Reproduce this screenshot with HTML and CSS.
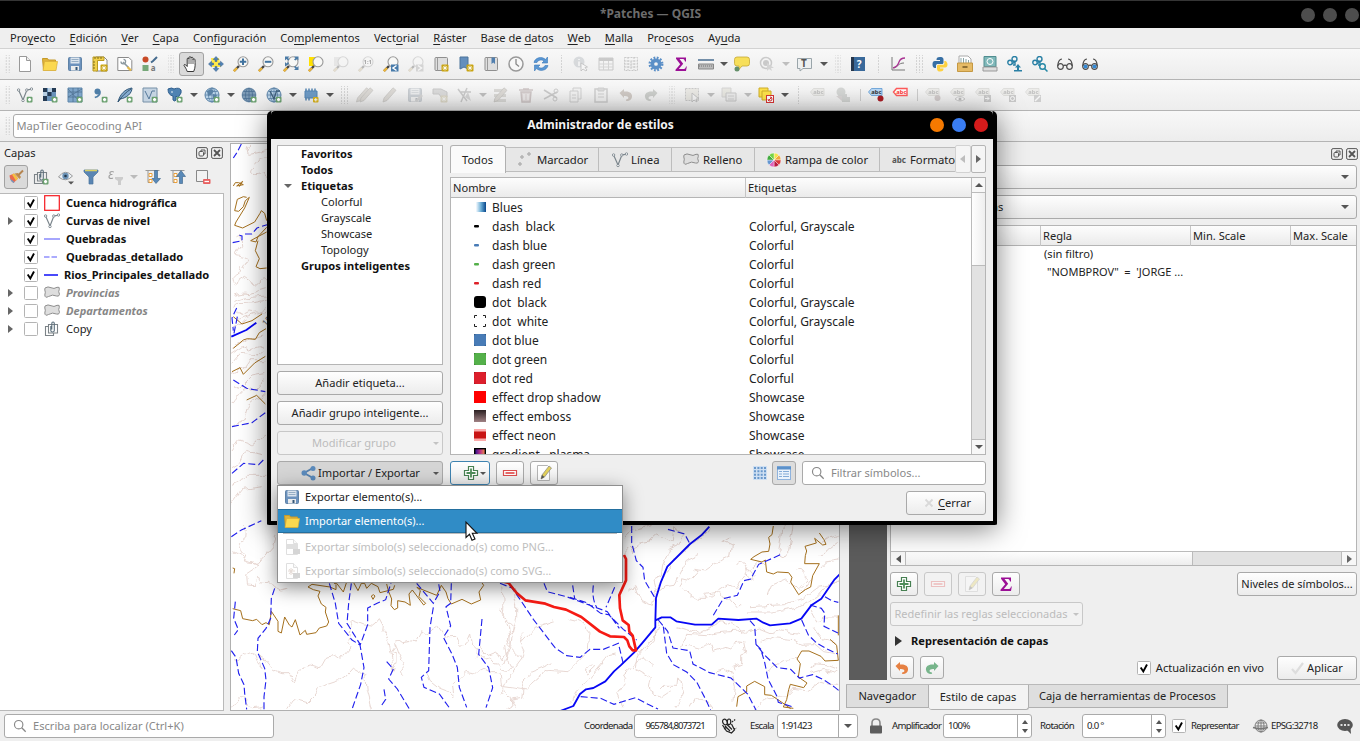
FILE: index.html
```html
<!DOCTYPE html>
<html lang="es">
<head>
<meta charset="utf-8">
<title>*Patches — QGIS</title>
<link rel="stylesheet" href="styles.css">
</head>
<body>
<svg class="defs" aria-hidden="true">
<defs>
<filter id="wiggle" x="-5%" y="-5%" width="110%" height="110%"><feTurbulence type="fractalNoise" baseFrequency=".035" numOctaves="2" seed="4"/><feDisplacementMap in="SourceGraphic" scale="22" xChannelSelector="R" yChannelSelector="G"/></filter>
<linearGradient id="blues"><stop offset="0" stop-color="#f7fbff"/><stop offset=".5" stop-color="#6baed6"/><stop offset="1" stop-color="#08468b"/></linearGradient>
<linearGradient id="emboss" x1="0" y1="0" x2="0" y2="1"><stop offset="0" stop-color="#2b2022"/><stop offset="1" stop-color="#a08184"/></linearGradient>
<linearGradient id="plasma"><stop offset="0" stop-color="#22108c"/><stop offset=".5" stop-color="#b52f8c"/><stop offset="1" stop-color="#f79143"/></linearGradient>
<symbol id="plus" viewBox="0 0 16 16"><rect x="9.700" y="9.700" width="5.800" height="5.800" rx="1" fill="#6aa06f"/><path d="M12.600 11v3.200M11 12.600h3.200" stroke="#fff" stroke-width="1.700"/></symbol>
<symbol id="star" viewBox="0 0 16 16"><rect x="8.500" y="8.500" width="7" height="7" rx="1" fill="#c9a412"/><path d="M12 9.500v5M9.500 12h5M10.300 10.300l3.400 3.400M13.700 10.300l-3.400 3.400" stroke="#fff" stroke-width=".8"/></symbol>
<symbol id="page" viewBox="0 0 16 16"><path d="M2.500.5h7l4 4v11h-11z" fill="#fff" stroke="#999"/><path d="M9.500.5v4h4" fill="#eee" stroke="#999"/></symbol>
<symbol id="folder" viewBox="0 0 16 16"><path d="M.5 2.500h5l1 1.500h7v10h-12z" fill="#e0b33c" stroke="#c59a2a"/><path d="M2.500 5.500h13l-1.500 9H1z" fill="#fbd850" stroke="#d9ae38" stroke-width=".7"/></symbol>
<symbol id="save" viewBox="0 0 16 16"><rect x="1.500" y="1.500" width="13" height="13" rx="1" fill="#6c92bd" stroke="#5f82a6"/><path d="M3.500 1.500h9v6h-9z" fill="#dce5ee"/><path d="M4.500 3.500h7M4.500 5.500h7" stroke="#96aec5"/><path d="M4 10h8v4.500H4z" fill="#eceded"/><path d="M8.500 11h2v3h-2z" fill="#345778"/></symbol>
<symbol id="layout" viewBox="0 0 16 16"><path d="M4 1h8l3 3v11H4z" fill="#fff" stroke="#888"/><path d="M1 1h11v3.500H5.500V15H1z" fill="#f1d14c" stroke="#b99a22"/><path d="M3 1v2M6 1v2M9 1v2M1 6h2M1 9h2M1 12h2" stroke="#7e6c1b"/></symbol>
<symbol id="tools" viewBox="0 0 16 16"><path d="M.8 1.500h11l3 3v10H.8z" fill="#fff" stroke="#8a8a8a"/><path d="M6 6l5.500 5.500" stroke="#8c989f" stroke-width="1.600"/><path d="M4 5.500a2.300 2.300 0 1 0 2.500-2.200" fill="none" stroke="#8c989f" stroke-width="1.300"/><path d="M10.500 11l3.500 3.500" stroke="#e3b94d" stroke-width="2.300"/></symbol>
<symbol id="stylemgr" viewBox="0 0 16 16"><circle cx="3.500" cy="3.500" r="3" fill="#c84a27"/><path d="M9 6.500l2-1.500 4-4" fill="none" stroke="#456b8e" stroke-width="2"/><rect x=".5" y="9" width="6" height="6" fill="#76a879"/><text x="8.700" y="15.300" font-size="8" font-weight="bold" fill="#777">a</text></symbol>
<symbol id="hand" viewBox="0 0 16 16"><path d="M4.200 15.500c-.8-2.500-2-4.300-3-5.700-.7-1 .5-1.800 1.400-1l1.600 1.700V3c0-1.300 1.700-1.300 1.800 0V1.700c0-1.400 1.900-1.400 2 0V2c.3-1.200 2-1 2 .3v1.200c.3-1 2-.8 2 .3 0 4 .8 7-1.300 11.700z" fill="#fff" stroke="#222" stroke-width=".9"/><path d="M6 3v5M8 2v6M10 3v5" stroke="#333" stroke-width=".8"/></symbol>
<symbol id="panarrows" viewBox="0 0 16 16"><path d="M3 2h8l2 9H4z" fill="#ffe94a"/><path d="M8 .5l2.800 3H9v2H7v-2H5.200zM8 15.500l2.800-3H9v-2H7v2H5.200zM.5 8l3-2.800V7h2v2h-2v1.800zM15.500 8l-3-2.800V7h-2v2h2v1.800z" fill="#4f83b5" stroke="#375f8a" stroke-width=".5"/></symbol>
<symbol id="lens" viewBox="0 0 16 16"><path d="M6 10L1 15" stroke="#444" stroke-width="2.400"/><path d="M4 12l-3.200 3.200" stroke="#efb73a" stroke-width="2.200"/><circle cx="10" cy="5.800" r="5" fill="#f8f8f6" stroke="#999" stroke-width="1.100"/></symbol>
<symbol id="globe" viewBox="0 0 16 16"><circle cx="8" cy="8" r="7" fill="#b9d3e8" stroke="#5a82a6"/><path d="M1 8h14M8 1v14M2.500 4.500h11M2.500 11.500h11" stroke="#5a82a6" stroke-width=".8" fill="none"/><ellipse cx="8" cy="8" rx="3.500" ry="7" fill="none" stroke="#5a82a6" stroke-width=".8"/></symbol>
<symbol id="vec" viewBox="0 0 16 16"><path d="M1.800 3.500L6 13 9.500 4q.8-1.700 4-1.700" fill="none" stroke="#7b858c" stroke-width="1.200"/><g fill="#fff" stroke="#7b858c" stroke-width=".9"><circle cx="1.600" cy="3" r="1.200"/><circle cx="6" cy="13.500" r="1.200"/><circle cx="9.800" cy="3" r="1.200"/><circle cx="14.500" cy="2" r="1.200"/></g></symbol>
<symbol id="poly" viewBox="0 0 16 16"><path d="M1 3q3-2 6-.3t6-.4q3-.9 2.300 2-1.300 2.200.2 5-.5 2.700-3 1.700-4-2-8 .5Q1 13.500.8 10q1-3 0-5 0-1.500.2-2z" fill="#dedede" stroke="#8e8e8e"/></symbol>
<symbol id="sheet" viewBox="0 0 16 16"><path d="M1 2h14v12H1z" fill="#f5f5f5" stroke="#777"/><path d="M1 3.500h14" stroke="#777" stroke-width="3"/><path d="M1 8h14M1 11h14M5.500 5v9M10.500 5v9" stroke="#999"/></symbol>
<symbol id="pencil" viewBox="0 0 16 16"><path d="M1 15l1-4L11 .8l3 2.500L5 13.500z" fill="#bba683" stroke="#766a55" stroke-width=".7"/></symbol>
<symbol id="tag" viewBox="0 0 16 16"><path d="M.5 5l3-3.500H14v7H3.500z" fill="#dedbc9" stroke="#aaa790" stroke-width=".8"/><text x="3.300" y="7.400" font-size="5.800" font-weight="bold" fill="#555">abc</text></symbol>
<symbol id="bluetag" viewBox="0 0 16 16"><path d="M.5 5l3-3.500H14v7H3.500z" fill="#b9d8f5" stroke="#5d9bd6" stroke-width=".8"/><text x="3.300" y="7.400" font-size="5.800" font-weight="bold" fill="#333">abc</text></symbol>
<symbol id="glasses" viewBox="0 0 16 16"><g stroke="#4c4c4c" fill="none" stroke-width="1.200"><circle cx="3.500" cy="10.500" r="2.800"/><circle cx="12.500" cy="10.500" r="2.800"/><path d="M6.300 9.800q1.700-1.500 3.400 0M.8 10C.8 6 2.500 3 5 3M15.200 10c0-4-1.700-7-4.200-7"/></g></symbol>
<symbol id="group" viewBox="0 0 16 16"><g fill="none" stroke="#7c8388" stroke-width="1.100"><path d="M4 5.500H1.500v9h8V12"/><path d="M4.500 3.500h9v8.500h-9z"/></g><path d="M6.800 5v4.500c0 2 3.500 2 3.500 0v-7c0-2-2.500-2-2.500 0v6" fill="none" stroke="#5b6f7c" stroke-width="1.100"/></symbol>
<symbol id="bigplus" viewBox="0 0 16 16"><path d="M5.500 1.500h5v4h4v5h-4v4h-5v-4h-4v-5h4z" fill="#fff" stroke="#478052" stroke-width="1.200"/><path d="M8 3.500v9M3.500 8h9" stroke="#4f8d5a" stroke-width="1.800"/></symbol>
<symbol id="minus" viewBox="0 0 16 16"><path d="M1.500 5.500h13v5h-13z" fill="#fff" stroke="#dd4f4f" stroke-width="1.200"/><path d="M3.500 8h9" stroke="#e96969" stroke-width="2"/></symbol>
<symbol id="edit" viewBox="0 0 16 16"><path d="M1.500.5h10l2 2v13h-12z" fill="#fff" stroke="#b5b5b5"/><path d="M5 14l1-4 7-9 2.500 2-7 9z" fill="#e3d15a" stroke="#888" stroke-width=".7"/><path d="M5 14l1-4 2.500 2z" fill="#555"/></symbol>
<symbol id="sigma" viewBox="0 0 16 16"><path d="M3 1.500h10v4h-1c-.5-2-1-2.500-3-2.500H6.500l3.700 4.700L5.800 13H10c2 0 2.500-.5 3-2.500h.8l-.8 4.500H2.500v-1.200l4.700-5.600L3 2.700z" fill="#9b0f96"/></symbol>
<symbol id="undo" viewBox="0 0 16 16"><path d="M1.500 6L6 2v2.500c6-.5 8.500 2 8 5.500-.4 2.500-2.500 4-5 4-1.500 0-1.500-1.500 0-1.700 2-.3 2.500-3.800-3-3.300v2z" fill="currentColor"/></symbol>
<symbol id="search" viewBox="0 0 16 16"><circle cx="6.500" cy="6.500" r="4.800" fill="none" stroke="#878787" stroke-width="1.300"/><path d="M10 10l4.500 4.500" stroke="#878787" stroke-width="1.500"/></symbol>
<symbol id="float" viewBox="0 0 12 12"><rect x=".6" y=".6" width="10.800" height="10.800" rx="1.500" fill="none" stroke="#555"/><rect x="3" y="4.500" width="4.500" height="4.500" rx="1" fill="none" stroke="#555"/><path d="M5 4V3h4v4H8" fill="none" stroke="#555"/></symbol>
<symbol id="shut" viewBox="0 0 12 12"><rect x=".6" y=".6" width="10.800" height="10.800" rx="1.500" fill="none" stroke="#555"/><path d="M3 3l6 6M9 3L3 9" stroke="#555" stroke-width="1.800"/></symbol>
<symbol id="binder" viewBox="0 0 16 16"><rect x="2" y="1.500" width="12.500" height="13" rx="1" fill="#dedede" stroke="#8f8f8f"/><path d="M4.500 1.500v13" stroke="#9a9a9a"/></symbol>
<symbol id="link" viewBox="0 0 16 16"><g fill="none" stroke="#2a80a5" stroke-width="1.400"><circle cx="3" cy="6.500" r="2.200"/><circle cx="7.500" cy="3" r="2.500"/><path d="M5 7.500c2 0 2-1 2-3M8 6v3H6"/></g></symbol>
<symbol id="check" viewBox="0 0 14 14"><rect x=".5" y=".5" width="13" height="13" rx="1" fill="#fff" stroke="#b4b4b4"/><path d="M3.700 6.500l2.600 4L10 3.500" fill="none" stroke="#000" stroke-width="1.900"/></symbol>
<symbol id="box" viewBox="0 0 14 14"><rect x=".5" y=".5" width="13" height="13" rx="1" fill="#fff" stroke="#b4b4b4"/></symbol>
</defs>
</svg>

<div class="window">
<header class="titlebar"><span class="title">*Patches — QGIS</span><span class="lights"><i></i><i></i><i></i></span></header>

<nav class="menubar">
<span>Pro<u>y</u>ecto</span><span><u>E</u>dición</span><span><u>V</u>er</span><span><u>C</u>apa</span><span>Con<u>f</u>iguración</span><span>Co<u>m</u>plementos</span><span>Vect<u>o</u>rial</span><span><u>R</u>áster</span><span>Base de <u>d</u>atos</span><span><u>W</u>eb</span><span><u>M</u>alla</span><span>Pro<u>c</u>esos</span><span>Ay<u>u</u>da</span>
</nav>

<div class="toolbar top">
<i class="grip first"></i>
<span class="tool"><svg><use href="#page"/></svg></span>
<span class="tool"><svg><use href="#folder"/></svg></span>
<span class="tool"><svg><use href="#save"/></svg></span>
<span class="tool"><svg><use href="#layout"/><use href="#star"/></svg></span>
<span class="tool"><svg><use href="#tools"/></svg></span>
<span class="tool"><svg><use href="#stylemgr"/></svg></span>
<i class="grip w16"></i>
<span class="tool on"><svg><use href="#hand"/></svg></span>
<span class="tool"><svg><use href="#panarrows"/></svg></span>
<span class="tool"><svg><use href="#lens"/><path d="M10 2.500v6.500M6.800 5.800h6.500" stroke="#41739f" stroke-width="2"/></svg></span>
<span class="tool"><svg><use href="#lens"/><path d="M6.800 5.800h6.500" stroke="#41739f" stroke-width="2"/></svg></span>
<span class="tool"><svg><use href="#lens"/><path d="M2 .5h4.500L5 2l1.500 1.500-1.500 1L3.500 3 2 4.500zM15.500.5H11L12.500 2 11 3.500l1.500 1L14 3l1.500 1.500zM15.500 14H11l1.500-1.500L11 11l1.500-1 1.500 1.500 1.500-1.500zM2 10.500V6l1.500 1.500L5 6l1 1.500L4.500 9z" fill="#4b7ba6"/></svg></span>
<span class="tool"><svg><path d="M1 1h8v9H1z" fill="#ffe000"/><use href="#lens"/></svg></span>
<span class="tool off"><svg><path d="M1 1h8v9H1z" fill="#ccc"/><use href="#lens"/></svg></span>
<span class="tool off"><svg><use href="#lens"/><text x="5.500" y="8" font-size="6" font-weight="bold">1:1</text></svg></span>
<span class="tool"><svg><use href="#lens"/><rect x="8" y="8.500" width="7.500" height="7" fill="#477baa"/><path d="M13.500 9.500L10 12l3.500 2.500" stroke="#fff" stroke-width="1.500" fill="none"/></svg></span>
<span class="tool off"><svg><use href="#lens"/><rect x="8" y="8.500" width="7.500" height="7" fill="#999"/><path d="M10 9.500l3.500 2.500-3.500 2.500" stroke="#fff" stroke-width="1.500" fill="none"/></svg></span>
<span class="tool"><svg><use href="#binder"/><use href="#star"/></svg></span>
<span class="tool"><svg><path d="M2 1h8v12l-4-2-4 2z" fill="#648fbd" stroke="#4d749b"/><use href="#star"/></svg></span>
<span class="tool"><svg><use href="#binder"/><path d="M8.500 1.500h3.500v6.500l-1.700-1.500L8.500 8z" fill="#517fae"/></svg></span>
<span class="tool"><svg><circle cx="8" cy="8" r="7" fill="#f8f8f8" stroke="#999" stroke-width="1.500"/><path d="M8 3v5l3 2.500" fill="none" stroke="#888" stroke-width="1.300"/></svg></span>
<span class="tool"><svg><path d="M1 6.500C2 1.500 9 0 12.500 3.500L14.500 1v6H9l2-2C8.500 3 5 4 4 6.500zM15 9.500C14 14.500 7 16 3.500 12.500L1.500 15V9H7l-2 2c2.500 2 6 1 7-1.500z" fill="#5a97d4" stroke="#3a78b8" stroke-width=".6"/></svg></span>
<i class="grip w15"></i>
<span class="tool off"><svg><circle cx="6" cy="6" r="5.500" fill="#93a8bd"/><path d="M6 3v1M6 5.500V10" stroke="#fff" stroke-width="1.500"/><path d="M8 7v8l2-2 3 2 1-1-2-2.500 2.500-.5z" fill="#fff" stroke="#555" stroke-width=".8"/></svg></span>
<span class="tool off"><svg><use href="#sheet"/></svg></span>
<span class="tool off"><svg><path d="M1.500 1.500h13v13h-13zM1.500 5h13M1.500 8h13M1.500 11h13M5 1v13M8 5v9M11 1v13" fill="none" stroke="#777" stroke-dasharray="2 1"/></svg></span>
<span class="tool"><svg><circle cx="8" cy="8" r="3.700" fill="none" stroke="#5b8fc7" stroke-width="3.700"/><circle cx="8" cy="8" r="6.300" fill="none" stroke="#5b8fc7" stroke-width="2.300" stroke-dasharray="1.800 1.500"/></svg></span>
<span class="tool"><svg><use href="#sigma"/></svg></span>
<span class="tool"><svg><path d="M0 4h16" stroke="#4a6e91" stroke-width="1.500"/><path d="M.5 8h15v5H.5z" fill="#bbb" stroke="#888"/><path d="M1 10h14" stroke="#777" stroke-dasharray="1 1"/></svg></span>
<i class="drop w11"></i>
<span class="tool"><svg><path d="M3 1h10q2.500 0 2.500 2.500v4Q15.500 10 13 10H8l-3.500 4L5 10H3Q.5 10 .5 7.500v-4Q.5 1 3 1z" fill="#f7df5a" stroke="#c5a836" stroke-width=".8"/><circle cx="3" cy="13" r="2.500" fill="#64906a"/></svg></span>
<span class="tool off"><svg><circle cx="7" cy="7" r="5.500" fill="none" stroke="#777" stroke-width="1.500"/><circle cx="7" cy="7" r="3" fill="#777"/><path d="M8 7v8l2-2 3 2-1-3h3z" fill="#999"/></svg></span>
<i class="drop w13 off"></i>
<span class="tool"><svg><path d="M.5 2.500h14v10H6L3 15v-2.500H.5z" fill="#edf0f1" stroke="#9aa5aa"/><text x="4" y="11" font-size="10" font-weight="bold" font-family="Liberation Serif" fill="#555">T</text></svg></span>
<i class="drop w12"></i>
<i class="grip w16"></i>
<span class="tool"><svg><path d="M1 1h14v14H1z" fill="#39699a"/><path d="M1 1h3v14H1z" fill="#26374c"/><text x="6.700" y="11.800" font-size="10" font-weight="bold" font-family="Liberation Serif" fill="#fff">?</text></svg></span>
<i class="grip w15"></i>
<span class="tool"><svg><path d="M2 1v13h13M4 12C8 11 8 7 14 7" fill="none" stroke="#777"/><path d="M3 12C7 11 8 9 9 6s3-4 6-4" fill="none" stroke="#aa3594" stroke-width="1.300"/></svg></span>
<i class="grip w17"></i>
<span class="tool"><svg><path d="M8 1C5 1 4.500 2 4.500 4H8v1H3C1 5 .5 6.500.5 8.500S1.500 12 3 12h1V9.500C4 8.500 5 8 6 8h4c1 0 1.500-.7 1.500-1.500V3.500C11.500 1.500 10 1 8 1z" fill="#376fa4"/><path d="M8 15.500c3 0 3.500-1 3.500-3H8v-1h5c2 0 2.500-1.500 2.500-3S14.500 5 13 5h-.7v2.200c0 1-.8 1.500-1.800 1.500h-4c-1 0-1.500.5-1.500 1.500v2.500c0 2 1.500 2.800 3 2.800z" fill="#fed13f"/></svg></span>
<span class="tool"><svg><path d="M2 0h9l3 3v5H2z" fill="#fff" stroke="#aaa"/><path d="M4 2v5M6.500 2v5M9 3v4M11.500 4v3" stroke="#89a5a7"/><path d="M.5 7h15v8.500H.5z" fill="#e6bb66" stroke="#c49843"/><path d="M5.500 11h5" stroke="#725724" stroke-width="1.500"/></svg></span>
<span class="tool"><svg><path d="M2 .5h12v10H2z" fill="#7fb8b9" stroke="#518d90"/><path d="M1 11h14v4H1z" fill="#ddd" stroke="#999"/><circle cx="8" cy="5.500" r="3" fill="none" stroke="#fff"/></svg></span>
<span class="tool"><svg><use href="#link"/><path d="M11 8l3 3.500h-2V14h3v1.500H7V14h3v-2.500H8z" fill="#2a80a5"/></svg></span>
<span class="tool"><svg><use href="#link"/><circle cx="10.500" cy="10.500" r="2.800" fill="none" stroke="#2387a5" stroke-width="1.400"/><path d="M12.500 12.500l3 3" stroke="#2387a5" stroke-width="1.500"/></svg></span>
<span class="tool"><svg><use href="#glasses"/></svg></span>
<span class="tool"><svg><use href="#glasses"/><circle cx="3.500" cy="10.500" r="2" fill="#3388d4"/><circle cx="12.500" cy="10.500" r="2" fill="#3388d4"/></svg></span>
</div>

<div class="toolbar">
<i class="grip first"></i>
<span class="tool"><svg><use href="#vec"/><use href="#plus"/></svg></span>
<span class="tool"><svg><path d="M1 1h13v13H1z" fill="#6a93bb"/><path d="M1 1h4v4H1zM10 1h4v4h-4zM5.500 5h4v4h-4zM1 9h4v5H1z" fill="#253b54"/><path d="M6 1h4v4H6zM1 5h4v4H1z" fill="#b8cfe3"/><use href="#plus"/></svg></span>
<span class="tool"><svg><path d="M1 1h14v14H1z" fill="#7fa6ca" stroke="#5f86aa"/><path d="M1 5h14M1 10h14M6 1v14M11 1v14M1 10L15 2M1 2l12 13" stroke="#4f7192" stroke-width=".8"/><use href="#plus"/></svg></span>
<span class="tool"><svg><circle cx="5.500" cy="4.500" r="3" fill="#4f7ea7"/><path d="M7.800 4.500c.5 3-1.500 5-5 6" fill="none" stroke="#4f7ea7" stroke-width="1.800"/><use href="#plus"/></svg></span>
<span class="tool"><svg><path d="M1 15C3 7 8 2 15 1c0 5-5 10-12 11z" fill="#87acd0" stroke="#315879"/><path d="M1 15C5 9 9 5 14 2" fill="none" stroke="#345571"/><use href="#plus"/></svg></span>
<span class="tool"><svg><path d="M1 1h14v14H1z" fill="#c5d4e2" stroke="#7690a7"/><path d="M3 4l4 8 3-8h3" fill="none" stroke="#55789a"/><use href="#plus"/></svg></span>
<span class="tool"><svg><path d="M1 2q4-2 6 0 5-2 7 1 1 3-2 6l-1 2-2-2v4q-1 2-3 0V9Q1 8 1 2z" fill="#4e82b2" stroke="#2e5e8d"/><circle cx="5" cy="5" r=".8" fill="#fff"/><use href="#plus"/></svg></span>
<i class="drop w12"></i>
<span class="tool"><svg><use href="#globe"/><path d="M3 4l4-2 3 2-3 4-3 1zM9 7l4 1-2 5-2-2z" fill="#5a82a6"/><use href="#plus"/></svg></span>
<i class="drop w12"></i>
<span class="tool"><svg><circle cx="8" cy="8" r="7" fill="#38597a"/><use href="#globe" opacity=".55"/><use href="#plus"/></svg></span>
<span class="tool"><svg><use href="#globe"/><path d="M4 4l4 8 2.500-8H14" fill="none" stroke="#3f5f7c" stroke-width="1.300"/><use href="#plus"/></svg></span>
<i class="drop w12"></i>
<span class="tool"><svg><path d="M2 4h12v7H2z" fill="#6e9bc6" stroke="#5585b3"/><path d="M3 1.500V4M6 1.500V4M9 1.500V4M12 1.500V4M3 11v2.500M6 11v2.500" stroke="#5585b3" stroke-width="1.500"/><rect x="10" y="10" width="5.500" height="5.500" rx="1" fill="#dcb41c"/><path d="M12.800 11v3.500M11 12.800h3.500" stroke="#fff"/></svg></span>
<i class="drop w12"></i>
<i class="grip w17"></i>
<span class="tool off"><svg><use href="#pencil" x="-1.500"/><use href="#pencil" x="2"/></svg></span>
<span class="tool off"><svg><use href="#pencil"/></svg></span>
<span class="tool off"><svg><use href="#save"/><path d="M8 14l6-7 2 2-6 6z" fill="#999"/></svg></span>
<span class="tool off"><svg><path d="M1 2h8l6 3v5H9l-2-3H1z" fill="#aaa" stroke="#777"/><use href="#star"/></svg></span>
<span class="tool off"><svg><path d="M1 2l9 12M10 1L4 15M4 5h10" stroke="#777" stroke-width="1.500"/><path d="M8 10l3-5 3 9z" fill="#999"/></svg></span>
<i class="drop w11 off"></i>
<span class="tool off"><svg><path d="M1 2h12v3H1zM1 7h12v3H1zM1 12h12v3H1z" fill="#aaa68e"/><use href="#pencil"/></svg></span>
<span class="tool off"><svg><path d="M1 3h14M5 2h6M3 5h10l-1 10H4z" fill="#d7a6a6" stroke="#a66" stroke-width="1.500"/><path d="M6 7v6M10 7v6" stroke="#fff"/></svg></span>
<span class="tool off"><svg><path d="M1 3l13 8M1 12l13-7" stroke="#777" stroke-width="1.500"/><circle cx="12" cy="12" r="2" fill="none" stroke="#777"/><circle cx="13" cy="4" r="2" fill="none" stroke="#777"/></svg></span>
<span class="tool off"><svg><path d="M5 1h8v11H5z" fill="#eee" stroke="#888"/><path d="M2 4h8v11H2z" fill="#eee" stroke="#888"/><path d="M4 8h4M4 11h4" stroke="#888"/></svg></span>
<span class="tool off"><svg><path d="M2 2h12v13H2z" fill="#eee" stroke="#888" stroke-width="1.500"/><path d="M5 1h6v3H5zM5 7h6M5 10h6" stroke="#888" fill="#aaa"/></svg></span>
<span class="tool off brown"><svg><use href="#undo"/></svg></span>
<span class="tool off olive"><svg><g transform="matrix(-1 0 0 1 16 0)"><use href="#undo"/></g></svg></span>
<i class="grip w16"></i>
<span class="tool off"><svg><path d="M1.500 1.500h13v12h-13z" fill="#ddd5b0" stroke="#777" stroke-dasharray="2 1"/><path d="M8 6v9l2-2 3 2-1-3h3z" fill="#fff" stroke="#666"/></svg></span>
<i class="drop w12 off"></i>
<span class="tool off"><svg><path d="M1 1h9v9H1z" fill="#d8d1a0" stroke="#999"/><path d="M5 6h10v8H5z" fill="#ddd" stroke="#777"/><path d="M7 9h6M7 12h6" stroke="#888"/></svg></span>
<i class="drop w12 off"></i>
<span class="tool"><svg><path d="M1 1h9v9H1z" fill="#ffe34a" stroke="#cfae2b"/><path d="M4 4h9v9H4z" fill="#ffe34a" stroke="#cfae2b"/><rect x="8.500" y="8.500" width="7" height="7" fill="#fff" stroke="#da3535"/><path d="M10 14l4-4M10 12a2 2 0 1 0 2-2" stroke="#da3535" fill="none"/></svg></span>
<i class="drop w12"></i>
<i class="grip w15"></i>
<span class="tool off"><svg><use href="#tag"/></svg></span>
<span class="tool off"><svg><circle cx="6" cy="5" r="4.500" fill="#8f9d8e"/><path d="M7 7h5v3h3v5H7z" fill="#8f9d8e"/><path d="M1 9h6v5z" fill="#b99"/></svg></span>
<i class="sep"></i>
<span class="tool"><svg><use href="#bluetag"/><circle cx="12.500" cy="11.500" r="3" fill="#aa1d25"/></svg></span>
<span class="tool"><svg><path d="M.5 5l3-3.500H14v7H3.500z" fill="#fff" stroke="#ff5a5a" stroke-width="1.400"/><text x="3.300" y="7.300" font-size="5.800" font-weight="bold" fill="#f33">abc</text></svg></span>
<i class="sep"></i>
<span class="tool off"><svg><use href="#tag"/><circle cx="12.500" cy="11" r="3" fill="#a77"/></svg></span>
<span class="tool off"><svg><use href="#tag"/><path d="M5 12q5-5 10 0-5 4-10 0z" fill="#fff" stroke="#777"/><circle cx="10" cy="12" r="1.500" fill="#555"/></svg></span>
<span class="tool off"><svg><use href="#tag"/><path d="M9 8h7v7H9z" fill="#777"/><path d="M10 11.500h4M12 9.500l2 2-2 2" stroke="#fff" fill="none"/></svg></span>
<span class="tool off"><svg><use href="#tag"/><path d="M9 8h7v7H9z" fill="#777"/><circle cx="12.500" cy="11.500" r="2" stroke="#fff" fill="none"/></svg></span>
<span class="tool off"><svg><use href="#tag"/><path d="M9 8h7v7H9z" fill="#888"/><path d="M10 14l5-5" stroke="#fff" stroke-width="1.500"/></svg></span>
</div>

<div class="toolbar third"><i class="grip first"></i><div class="geocode">MapTiler Geocoding API</div></div>

<main class="main">
<section class="layers">
<div class="dockhead"><span>Capas</span><svg class="s12"><use href="#float"/></svg><svg class="s12"><use href="#shut"/></svg></div>
<div class="layertools">
<span class="lt on"><svg><path d="M1.500 6.500L6 4.500l4 5-4.500 4.500Q2 12 1.500 6.500z" fill="#e9694f"/><path d="M4 5.500l2-1 4 5-2 2.200z" fill="#f5c142"/><path d="M2 9.500l4.500 3.500-1 1Q3 13 2 9.500z" fill="#6d9ac6"/><path d="M6.500 4.500l5 5.500 1.500-2-3-4z" fill="#c08b4c"/><path d="M10 6.500l5-5" stroke="#b58550" stroke-width="2"/></svg></span>
<span class="lt"><svg><use href="#group"/><use href="#plus"/></svg></span>
<span class="lt"><svg><path d="M.5 8Q7-1 14.500 7 8 14 .5 8z" fill="#eef3f7" stroke="#999"/><circle cx="7.500" cy="7" r="3.200" fill="#6b92b6"/><circle cx="7.500" cy="7" r="1.300" fill="#25394d"/><path d="M10 12.500h6l-3 3z" fill="#555"/></svg></span>
<span class="lt"><svg><path d="M1 1h14v2l-5 5v7H6V8L1 3z" fill="#5985b3" stroke="#4c769e" stroke-width=".7"/><path d="M2 1.500h12" stroke="#d9cf62" stroke-width="1.500"/></svg></span>
<span class="lt off"><svg><text x="0" y="10" font-size="14" font-family="Liberation Serif" font-style="italic">ε</text><path d="M7 8h8v2l-2 2v4h-3v-4L7 10z" fill="#888"/></svg></span>
<i class="drop w12 off"></i>
<span class="lt"><svg><path d="M.5 1.500h14M3 1.500v12h3" stroke="#999" fill="none"/><path d="M4 4.500h3v3H4zM4 10.500h3v3H4z" fill="#fff" stroke="#eba03a"/><path d="M9.500 1.500h3v8h3l-4.500 5-4-5h2.500z" fill="#5989b8" stroke="#355f87" stroke-width=".6"/></svg></span>
<span class="lt"><svg><path d="M.5 1.500h14M3 1.500v12h3" stroke="#999" fill="none"/><path d="M4 4.500h3v3H4zM4 10.500h3v3H4z" fill="#fff" stroke="#eba03a"/><path d="M9.500 14.500h3v-7h3L11 1.500l-4.500 6h3z" fill="#5989b8" stroke="#355f87" stroke-width=".6"/></svg></span>
<span class="lt"><svg><path d="M1.500 1.500h11v11h-11z" fill="#f2f2f2" stroke="#888"/><rect x="8" y="10" width="7.500" height="5" rx="1" fill="#e86060"/><path d="M9.500 12.500h4.500" stroke="#fff" stroke-width="1.300"/></svg></span>
</div>
<ul class="tree">
<li><i class="tw"></i><svg class="s14"><use href="#check"/></svg><svg class="s16"><rect x=".7" y=".7" width="14.600" height="14.600" fill="#fff" stroke="#f5191f" stroke-width="1.200"/></svg><b>Cuenca hidrográfica</b></li>
<li><i class="tw has"></i><svg class="s14"><use href="#check"/></svg><svg class="s16"><use href="#vec"/></svg><b>Curvas de nivel</b></li>
<li><i class="tw"></i><svg class="s14"><use href="#check"/></svg><svg class="s16"><path d="M0 8h16" stroke="#9090fd" stroke-width="1.600"/></svg><b>Quebradas</b></li>
<li><i class="tw"></i><svg class="s14"><use href="#check"/></svg><svg class="s16"><path d="M0 8h14" stroke="#9090fd" stroke-width="1.600" stroke-dasharray="5.500 2"/></svg><b>Quebradas_detallado</b></li>
<li><i class="tw"></i><svg class="s14"><use href="#check"/></svg><svg class="s16 narrow"><path d="M0 8h14" stroke="#4a4afa" stroke-width="2"/></svg><b>Rios_Principales_detallado</b></li>
<li><i class="tw has"></i><svg class="s14"><use href="#box"/></svg><svg class="s16"><use href="#poly"/></svg><b class="dim">Provincias</b></li>
<li><i class="tw has"></i><svg class="s14"><use href="#box"/></svg><svg class="s16"><use href="#poly"/></svg><b class="dim">Departamentos</b></li>
<li><i class="tw has"></i><svg class="s14"><use href="#box"/></svg><svg class="s16"><use href="#group"/></svg><span>Copy</span></li>
</ul>
</section>

<section class="canvas">
<svg class="map" viewBox="231 144 608 566">
<g transform="translate(0 140) scale(.33333)" fill="none" stroke-width="3">
<g class="contour"><path d="M755 10q-25 20-5 30 30-5 60-15M800 50l-20 5-28 35q-5 20 40 5l10 20M705 292l18-8 2 30-18 30 25 5 14 8-15 28-8-10-8 28-16 15 4 14M700 438l14-12 22-14 18 12 14 12 24-20 20 8M700 466q20-10 50-5l50-15M700 484l30-10 70-6M700 505l15-14 40-2 45-8M710 515l16 10 24-12 26 4 24-14M715 540l26-8 25-10 33-8M700 560l40-20M700 625l40-25 50-15"/></g>
<g class="brown"><path d="M700 138l6-10h10l14 6-20 4 18-14-10 16M740 172l-10-2-18 8-8 34 12 2 14-14 6-18 12-10-14 32-26 42-4 10 24 8 36-18 16-26 4-8 10 8 6 22M752 302l22-12 26-28M752 302l16 4 6-16 26-14M774 302l-8 30 12 24-10 24 12 6 20-2M700 530l26 22 30-10 30-20M700 625l30-25 12-4 24 2 12-20 20-12"/></g>
<g class="stream"><path d="M724 12l-12 24-12 18M698 308l28-6v-14l-16-4M735 282h20l16-18 30-10M710 504l-14 30 4 38M712 530l-12 60"/></g>
<g class="river"><path d="M694 590l45-20 30-22"/></g>
</g>
<g transform="translate(220 220) scale(.33333)" fill="none" stroke-width="3">
<g class="contour"><path d="M36 400l30-20 20 10 40-12M36 430l25-30 50 8 20-18M36 460l40-16 15-22 45 0M36 500l20 8 40-40 40-8M36 550l30-40 50-5 20-26M36 620l35-20 12-40 50-40M36 690l22-30 40 14 40-32M36 740l26-16 15-30 50 10M36 790l50-24 50 0M36 850l32-42 60-8"/></g>
<g class="brown"><path d="M36 455l24-12 10 20 34-34 32-20M80 540l30-14 26 26"/></g>
<g class="stream"><path d="M40 480l40 25 56 10M36 620l60-12 40-30M36 760l35-30 45 4 20-20"/></g>
</g>
<g transform="translate(220 520) scale(.33333)" fill="none" stroke-width="3">
<g class="contour"><path d="M40 95l34 18 10 16 18 2 12 6-10 8-24 16 2 34 20 2 10-28 12 20 26-2 10 12 24 14 18-5M64 18l12 14-2 22-16 14 6 28 16 26 30 12 48-54 10-42M40 410l10 10 20-15 30-8 12 30 14 16-8-35 14 5 28 35 26 10 18 0 20 28 16-38 34-10 26 8 20-35 24-4 16 12 30-35-6-20 12-38-6-14 6-14 36 14 30 4 16-20 12 22-2 14 18 30 4 24 5 20 3 35-2 16 12-32 0-26-14-5 14-20M548 470l-8-18 14-22-16-28-6-18-8-16 10-10 14 10 34-6 6 8 20-38 14 12 30-25 24 35 32-2 10 24 20-2 14-32 6 36 14 14-2 16 14-2 10 12 16-5 32 36 14 5 24-12-22-40-4-30M34 568l34-42 10 8-2 16 24 16 20-2 10-6M200 566l22-30 40 12 26-26 8-20 60-20 20-14 22-24 36 20 5 45 15 58M620 455l10 26 30 24 26 10 16 15-5-36 38-40 36 6 24-12 20 10 25 0 6 52 26 22 14 28M840 525l30-60 30-40 12-32-12-24 10-25M860 565l16-10-2-14 34-6 4-26-8-24 30-28 45-18 12-8M900 370l45-48 60-20M845 200q8 40 0 90l35 34-8 52-25 50-20-30-25 10-25-24"/></g>
<g class="brown"><path d="M38 266l24 6 6 24 30 6 12-4 16 16 12-6 10 6 6-40 20 30 0 30 10 5 10-48 14 24 8 6 10-22 14 46 16-14 4 12 28-5 10-14 22-6 6-12-10-30 2-14-14-10-10-24 6-14-20-5-16-8 12-8 54 8 18 8 0-16M342 190l8 0 20 26 10-30 20 0 14 26 10-22 10 0 6 15 14-15 20 10 6 18 40-10 4-12M500 192l5 20 10 25-2 20 10 12 10-5 0-22 22 4 16 10-4-34 10-12 34 45 6-5-20-20 4-18-10-10M590 202l20 8 40 16 14-30 14 20 6 20 10 16 32-14 28 14 28-12-5-24 14-20-8-12M454 228l6-4 5 4-6 10zM38 144l6 2-2 14"/></g>
<g class="stream"><path d="M34 50l30-20 60-28M164 205l-10 30-2 60-14 30-24 30-2 40 22 50 4 35-6 50 0 40M46 245l-5 50 14 34-12 16M34 392l14 20 8 48 16 34 2 26 6 48M328 190l18 60 10 60 40 50 24 15 12 68-10 50-26 75M394 190l-8 60-5 60 40 64 22-60 0-50 30-15 24-10 16-50M590 190l50 60 20-35-5-30M640 262l-10 60-4 130-22 20 8 30 46 20 32 44M694 190l-2 60-14 10 14 58-22 34 26 50 16 40 6 60 22 60M786 297l-10 106 30 40 12 60-20 60M500 425l20 22-14 30 26 30 36 60M492 508l5 30-16 24"/></g>
</g>
<g transform="translate(500 510) scale(.33333)" fill="none" stroke-width="3">
<g class="contour"><path d="M370 130l22-24 10 26 10-36 38-6 20-18 50 26 4-45 26 24-16 28-26 12-20 45-4 36-22 12 10 38 22-18 28-4 40-75 34-15M385 240l20-10 14 40 38 16 18-55 42-75 50-45 28-20 36-34M375 85l14-20 22-8 24-6 20-5M540 230l10-24 20 5 26-28-18-8 40 5 46-32 25-10 5-30-26-12 20-12M548 236l30 24 14 8 30 0-8-14 35-8 36 20 26 30 16-14M628 260l55-36 26 12 34-52 30-25 20-2M710 168l8-10 22 16 6 44 22-22-14-16-14-6M805 255l12-30 42-18 48 40 30-40M750 290l100-6 60-20 45-32 38-8 24-12M742 306h70l80-14 60-30 32-36 33-12M530 350l70 20 60-35 40 10 36 22 40-10 34 14 24-10 60 12M545 415l14-42 60 4 30-8 60-6 26-4M558 405l36 10 42-14 6 20 36-12 18 6 12-20 26 4 6 30-18 6 0 24-26 10 6 14M648 486l26-8 22 12 10 40-4 42M785 398l36-15 60 6 22 14 40-2 28 24 34 6M800 480l50-28 46-8M760 600l40-40 60-2 20-20 40 4 40-25 55 10M465 472l-34-30-24 20-36 30 6 20-26 40 18 40M0 300q35 50 30 110l-20 60M40 240q30 80-20 160l50 50M0 525l80 12 24-26 40-30 60 4 60-60 6-56-24-30-40-10M215 580l12-35 22-16 28-35 50-60 20-5M480 335l-12 40-52 60-8 40 40 24-6 34 40 30 30-20M450 365l15 0 2 20-30 36M480 540l14-14h34l2-22 26 20-8 30-20 36M570 590l14-24 36 4 20 26M925 475l20-14 40 4 32 12M930 490l40-12 45 10M260 480q12-24 24-10l-24 22zM845 60l20-20 15 4-14 80-16 20-15-8zM890 180q25-8 22 12l10 20-24 22M930 300l20 36 20-15 46 0M940 350l30 40 46 10M960 100l24-16 32-8M950 130l20 0 46-36M960 180l22-24 34-6"/></g>
<g class="brown"><path d="M820 48l-4 26-10 8 4 20-4 22-20 2-24 14-10 8 34 8 10-6 4 36 20 6 12-6 34 2 10 14-4 14 24 38 20-15 16-8 6-34 20-36-44 0 2-24 4-14-5-14 34-10-5-14 24 20 10-2-6-14-14-20M1015 316v60M990 388l20 18 5 45-40 2-12-14-36-16-22 0-14 24 10 14-6 40 26 18-10 14-40-10-5 16-6 30-10 22 30 4M710 590l4-30 26-14 0-18 24-14 30 16 0 24 20 2 30 20 28 20"/></g>
<g class="stream"><path d="M395 48v50l14 54 20 20 5 40 30 50M504 58l50 14 16 30M0 220l36 14 24 34 40 60 65 85 35 24 40 5 30-24 40 0 45-18 16 66M132 220l10 25 60 16 120 44 36 50M218 226l6 40M280 226q-5 40 10 66M344 232l-26 60M210 262l50 16 42 32 24 4 44 44 40 32M490 350l10 80 20 34 40 22 30 30 26 50 16 34M475 330l28 34 16 50 50 8 10 40 50 26 64 16 50 48 30 58M640 316l30-50 42-10 20-44 20-5 24-44 68-30M750 332l14 16 4 55 24 30 40 40 40 5 26 26 40-10 34 16 30 20 15 12M768 403l14 14 12 40 10 50 26 50 5 20 45 14M905 330l20 45 26 25 32 18 30 14M930 285l34 10 10 14-2 40 42 20M975 260l20 12 20 5M242 560l60 5 40 18 64-20 38 20 30 14"/></g>
<g class="river"><path d="M628 50l-24 26-34 26-68 68-20 48-14 46-2 70 0 18-40 48-24 28-40 38-20 18-26 30-36 20-22 4-18 14-20 36-32 12-14 6M465 332l20-10 26 0 18 12 56 10 50 0 20-18 60 4 55-4 20 12 20 8 60-6 34-14 30-40 30-20 40-58 18-18"/></g>
<g class="red"><path d="M372 135l6 12 0 64-20 44 2 40 8 36 18 14 2 20 10 12 10 44-10 0-10-12-6-18-10-10-42-2-30-14-56-44-46-22-36-8-26-10-60-10-26-22-24-30-14-4"/></g>
</g>
<text class="elev" x="262" y="326" transform="rotate(-45 264 322)">15</text>
</svg>
</section>

<section class="styling">
<div class="dockhead right"><svg class="s12"><use href="#float"/></svg><svg class="s12"><use href="#shut"/></svg></div>
<div class="stylebody">
<div class="darkstrip"></div>
<div class="rules">
<div class="combo"><span></span><i class="caret"></i></div>
<div class="combo"><span>Reglas</span><i class="caret"></i></div>
<div class="ruletable">
<div class="rhead"><span></span><span>Regla</span><span>Min. Scale</span><span>Max. Scale</span></div>
<div class="rrow"><span></span><span>(sin filtro)</span></div>
<div class="rrow"><span></span><span class="wide">"NOMBPROV"&nbsp; =&nbsp; 'JORGE ...</span></div>
<div class="hscroll"><i class="sb"><i class="left"></i></i><i class="thumb"></i><i class="trough"></i><i class="sb"><i class="right"></i></i></div>
</div>
<div class="brow">
<span class="btn sq"><svg><use href="#bigplus"/></svg></span><span class="btn sq dis"><svg><use href="#minus"/></svg></span><span class="btn sq dis"><svg><use href="#edit"/></svg></span><span class="btn sq"><svg><use href="#sigma"/></svg></span>
<span class="btn levels">Niveles de símbolos...</span>
</div>
<div class="btn redefine dis"><span>Redefinir las reglas seleccionadas</span><i class="caret sm"></i></div>
<div class="rendering"><i class="tri"></i><b>Representación de capas</b></div>
<div class="brow apply">
<span class="btn small orange"><svg><use href="#undo"/></svg></span><span class="btn small green"><svg><g transform="matrix(-1 0 0 1 16 0)"><use href="#undo"/></g></svg></span>
<svg class="s14 live"><use href="#check"/></svg><span class="livelabel">Actualización en vivo</span>
<span class="btn applybtn"><svg class="s14"><path d="M1 8l3.500 4L12 2" fill="none" stroke="#ddd" stroke-width="2.200"/></svg>Aplicar</span>
</div>
</div>
</div>
<div class="docktabs"><span>Navegador</span><span class="cur">Estilo de capas</span><span>Caja de herramientas de Procesos</span></div>
</section>
</main>

<footer class="status">
<div class="field locator"><svg class="s14"><use href="#search"/></svg><span>Escriba para localizar (Ctrl+K)</span></div>
<span class="coordlabel">Coordenada</span>
<div class="field coord">965784,8073721</div>
<svg class="s16 rat"><g fill="none" stroke="#222" stroke-width="1.200"><ellipse cx="4" cy="4" rx="2.200" ry="3" transform="rotate(-30 4 4)"/><ellipse cx="8" cy="3.800" rx="1.800" ry="2.800"/><path d="M1.500 7l4 6 5 2 3-3-3-6M4 8l5 5M6 6.500l5 5M3 11l3-2"/><path d="M11 4l4-3M13 11l2.500-1" stroke-dasharray="1.500 1"/></g></svg>
<span class="scalelabel">Escala</span>
<div class="field scale"><span>1:91423</span><i class="cell"><i class="caret"></i></i></div>
<svg class="s16 lock"><path d="M4 8V5q0-4 4-4t4 4v3" fill="none" stroke="#888" stroke-width="1.600"/><rect x="2" y="7.500" width="12" height="8" rx="1" fill="#5d5d5d"/></svg>
<span class="maglabel">Amplificador</span>
<div class="field mag"><span>100%</span><i class="spin"><i class="up"></i><i class="caret"></i></i></div>
<span class="rotlabel">Rotación</span>
<div class="field rot"><span>0.0 °</span><i class="spin"><i class="up"></i><i class="caret"></i></i></div>
<svg class="s14 rend"><use href="#check"/></svg><span class="rendlabel">Representar</span>
<svg class="s16 crs"><g fill="none" stroke="#777" stroke-width=".9"><circle cx="9" cy="8" r="6"/><ellipse cx="9" cy="8" rx="3" ry="6"/><path d="M3 8h12M4 5h10M4 11h10M9 2v12"/><path d="M1 9.500q7 2 15 0" stroke-width="1.500"/></g></svg>
<span class="crslabel">EPSG:32718</span>
<svg class="s16 bubble"><ellipse cx="8" cy="7" rx="7.800" ry="6" fill="#555"/><path d="M9 11l5 5-.5-6z" fill="#555"/><path d="M3.500 7h2M7 7h2M10.500 7h2" stroke="#ddd" stroke-width="2"/></svg>
</footer>
</div>

<div class="dialog">
<div class="dtitle"><span>Administrador de estilos</span><i class="o"></i><i class="b"></i><i class="r"></i></div>
<div class="dbody">
<div class="dleft">
<ul class="tags">
<li><b>Favoritos</b></li><li><b>Todos</b></li><li class="open"><b>Etiquetas</b></li><li class="sub">Colorful</li><li class="sub">Grayscale</li><li class="sub">Showcase</li><li class="sub">Topology</li><li><b>Grupos inteligentes</b></li>
</ul>
<div class="btn full">Añadir etiqueta...</div>
<div class="btn full">Añadir grupo inteligente...</div>
<div class="btn full dis"><span class="grow modify">Modificar grupo</span><i class="caret sm"></i></div>
<div class="btn full pressed"><span class="grow"><svg><path d="M3 8l9-5M3 8l9 5" stroke="#5580ad" stroke-width="2"/><circle cx="3.200" cy="8" r="2.700" fill="#5b8abb"/><circle cx="12" cy="3.500" r="2.500" fill="#5b8abb"/><circle cx="12" cy="13" r="2.500" fill="#5b8abb"/></svg>Importar / Exportar</span><i class="caret sm"></i></div>
</div>
<div class="dright">
<div class="tabs">
<span class="tab cur">Todos</span>
<span class="tab t2"><svg><g fill="#eee" stroke="#999"><circle cx="2" cy="12" r="1.200"/><circle cx="4" cy="5" r="1.200"/><circle cx="11" cy="2" r="1.200"/></g></svg>Marcador</span>
<span class="tab t3"><svg><use href="#vec"/></svg>Línea</span>
<span class="tab t4"><svg><use href="#poly"/></svg>Relleno</span>
<span class="tab t5"><svg><g stroke="#fff" stroke-width=".4"><path d="M8 8V1a7 7 0 0 1 5 2z" fill="#f4e54a"/><path d="M8 8l5-5a7 7 0 0 1 2 5z" fill="#f3a739"/><path d="M8 8h7a7 7 0 0 1-2 5z" fill="#dc3838"/><path d="M8 8l5 5a7 7 0 0 1-5 2z" fill="#b91840"/><path d="M8 8v7a7 7 0 0 1-5-2z" fill="#df65bd"/><path d="M8 8l-5 5a7 7 0 0 1-2-5z" fill="#6496d0"/><path d="M8 8H1a7 7 0 0 1 2-5z" fill="#40aa3f"/><path d="M8 8L3 3a7 7 0 0 1 5-2z" fill="#76d343"/></g></svg>Rampa de color</span>
<span class="tab t6"><small>abc</small>Formato</span>
<span class="tabnav faint"><i class="left pale"></i></span><span class="tabnav"><i class="right"></i></span>
</div>
<div class="list">
<div class="listmain">
<div class="lhead"><span>Nombre</span><span>Etiquetas</span></div>
<div class="lrows">
<div class="lrow"><svg><rect x="2" y="1" width="10" height="10" fill="url(#blues)"/></svg><span>Blues</span><span></span></div>
<div class="lrow"><svg><rect x="0" y="5" width="5" height="2.500" rx="1" fill="#000"/></svg><span>dash&nbsp; black</span><span>Colorful, Grayscale</span></div>
<div class="lrow"><svg><rect x="0" y="5" width="5" height="2.500" rx="1" fill="#487bb6"/></svg><span>dash blue</span><span>Colorful</span></div>
<div class="lrow"><svg><rect x="0" y="5" width="5" height="2.500" rx="1" fill="#54b04a"/></svg><span>dash green</span><span>Colorful</span></div>
<div class="lrow"><svg><rect x="0" y="5" width="5" height="2.500" rx="1" fill="#de2028"/></svg><span>dash red</span><span>Colorful</span></div>
<div class="lrow"><svg><rect width="12" height="12" rx="3"/></svg><span>dot&nbsp; black</span><span>Colorful, Grayscale</span></div>
<div class="lrow"><svg><path d="M.5 3V.5H3M9 .5h2.500V3M11.500 9v2.500H9M3 11.500H.5V9" fill="none" stroke="#222"/></svg><span>dot&nbsp; white</span><span>Colorful, Grayscale</span></div>
<div class="lrow"><svg><rect width="12" height="12" fill="#31557e"/><rect width="12" height="12" rx="2.500" fill="#487bb6"/></svg><span>dot blue</span><span>Colorful</span></div>
<div class="lrow"><svg><rect width="12" height="12" fill="#3b7a35"/><rect width="12" height="12" rx="2.500" fill="#54b04a"/></svg><span>dot green</span><span>Colorful</span></div>
<div class="lrow"><svg><rect width="12" height="12" fill="#9a161e"/><rect width="12" height="12" rx="2.500" fill="#dc1f2c"/></svg><span>dot red</span><span>Colorful</span></div>
<div class="lrow"><svg><rect width="12" height="12" fill="#f00"/></svg><span>effect drop shadow</span><span>Showcase</span></div>
<div class="lrow"><svg><rect width="12" height="12" fill="url(#emboss)"/></svg><span>effect emboss</span><span>Showcase</span></div>
<div class="lrow"><svg><rect width="12" height="12" fill="#fbaaaa"/><rect y="2.500" width="12" height="7" fill="#c81515"/></svg><span>effect neon</span><span>Showcase</span></div>
<div class="lrow"><svg><rect x=".7" y=".7" width="10.600" height="10.600" fill="url(#plasma)" stroke="#000" stroke-width="1.400"/></svg><span>gradient&nbsp;&nbsp; plasma</span><span>Showcase</span></div>
</div>
</div>
<div class="vscroll"><i class="vb"><i class="up"></i></i><i class="vthumb"></i><i class="vtrough"></i><i class="vb"><i class="caret"></i></i></div>
</div>
<div class="dtools">
<span class="btn add"><svg><use href="#bigplus"/></svg><i class="caret sm"></i></span><span class="btn sq"><svg><use href="#minus"/></svg></span><span class="btn sq"><svg><use href="#edit"/></svg></span>
<svg class="s14 gridicon"><rect width="14" height="14" fill="#cfe0f3"/><path d="M2 1v12M5.400 1v12M8.700 1v12M12 1v12" stroke="#6a98cb" stroke-width="2" stroke-dasharray="2 1.330"/></svg>
<span class="btn viewbtn"><svg class="s14"><rect x=".5" y=".5" width="13" height="13" fill="#eaf2fb" stroke="#8fb3dd"/><path d="M0 2h14" stroke="#5b91ca" stroke-width="3"/><path d="M2 5.500h3M6 5.500h6M2 8h3M6 8h6M2 10.500h3M6 10.500h6" stroke="#84abd7"/></svg></span>
<div class="field filter"><svg class="s14"><use href="#search"/></svg><span>Filtrar símbolos...</span></div>
</div>
<div class="closerow"><span class="btn close"><svg><path d="M4.500 4.500l7 7M11.500 4.500l-7 7" stroke="#d9d9d9" stroke-width="1.800"/></svg><span><u>C</u>errar</span></span></div>
</div>
</div>
</div>

<div class="popup">
<div class="mi"><svg><use href="#save"/></svg>Exportar elemento(s)...</div>
<div class="mi hot"><svg><use href="#folder"/></svg>Importar elemento(s)...</div>
<hr>
<div class="mi gray"><svg><use href="#page"/><path d="M2 5h11v5H2z" fill="#999"/><path d="M9 10h7v5H9z" fill="#777"/></svg>Exportar símbolo(s) seleccionado(s) como PNG...</div>
<div class="mi gray"><svg><use href="#page"/><path d="M7 5v7M4 8h7M5 6l4 5M9 6l-4 5" stroke="#a87"/><path d="M9 10h7v5H9z" fill="#777"/></svg>Exportar símbolo(s) seleccionado(s) como SVG...</div>
</div>
<svg class="cursor" viewBox="0 0 14 21"><path d="M1 1v15.500l3.500-3.200 2.500 6 3-1.300-2.700-5.700h4.700z" fill="#fff" stroke="#111" stroke-width="1.100"/></svg>
</body>
</html>
```

FILE: styles.css
```css
* { box-sizing: border-box; }
html, body { margin: 0; height: 100%; overflow: hidden; }
body { font: 11.1px/16px "Noto Sans", sans-serif; color: #222; background: #efefef; position: relative; }
i { font-style: normal; display: block; }
b { color: #111; }
ul { list-style: none; margin: 0; padding: 0; }
svg { display: block; width: 16px; height: 16px; flex: none; overflow: visible; }
svg text { font-family: "Noto Sans", sans-serif; }
.defs { position: absolute; width: 0; height: 0; }
.s12 { width: 12px; height: 12px; }
.s14 { width: 14px; height: 14px; }
.window { width: 1360px; height: 741px; display: flex; flex-direction: column; }

.titlebar { height: 28px; background: #000; border-top: 1px solid #353535; display: flex; align-items: center; justify-content: center; flex: none; }
.title { font-size: 12px; font-weight: bold; color: #6c6c6c; flex: 1; text-align: center; padding-bottom: 2px; }
.lights { display: flex; gap: 8px; width: 59px; }
.lights i { width: 14px; height: 14px; border-radius: 50%; background: #4d4d4d; flex: none; }

.menubar { height: 20px; background: #efefef; display: flex; gap: 14.050px; padding: 2px 10px 0; flex: none; }
u { text-underline-offset: 2px; text-decoration-thickness: 1px; }

.toolbar { height: 31px; border-bottom: 1px solid #b4b4b4; background: linear-gradient(#f8f8f8, #ededed); display: flex; align-items: center; flex: none; }
.top { height: 32px; border-top: 1px solid #d2d2d2; }
.tool { width: 25px; height: 24px; flex: none; display: flex; align-items: center; justify-content: center; }
.on { background: #dadada; border: 1px solid #a2a2a2; border-radius: 3px; }
.off { opacity: .33; filter: grayscale(.65); }
.tool.brown { color: #a67248; }
.olive { color: #77876e; }
.grip { flex: none; height: 18px; background: radial-gradient(circle, #b4b4b4 0 .8px, transparent 1px) center / 3px 3px; background-clip: content-box; padding: 0 5px; }
.first { width: 12.500px; padding: 0 3px 0 4px; }
.w16 { width: 16px; } .w15 { width: 15px; } .w17 { width: 17px; }
.drop { flex: none; height: 16px; display: grid; place-items: center; }
.drop::after, .caret { content: ""; width: 0; height: 0; border: 4px solid transparent; border-top: 4px solid #555; border-bottom: 0; }
.w11 { width: 11px; } .w12 { width: 12px; } .w13 { width: 13px; }
.sep { width: 7.500px; height: 12px; border-left: 1px solid #ccc; margin-left: 4px; margin-right: -4px; flex: none; }
.geocode { width: 400px; height: 24px; border: 1px solid #aaa; border-radius: 3px; background: #fff; color: #898989; line-height: 22px; padding-left: 3px; }

.main { height: 569px; flex: none; display: flex; background: #efefef; }
.layers { width: 224px; display: flex; flex-direction: column; }
.dockhead { height: 22px; display: flex; align-items: center; gap: 3px; padding: 0 1px 0 4px; flex: none; }
.dockhead span { flex: 1; }
.layertools { height: 29px; flex: none; display: flex; align-items: center; padding: 0 0 3px 4px; gap: 1px; }
.lt { width: 24px; height: 24px; display: flex; align-items: center; justify-content: center; }
.layertools .drop { margin: 0 0 0 -1px; }
.tree { flex: 1; background: #fff; border: 1px solid #b9b9b9; border-left: 0; }
.tree li { height: 18px; display: flex; align-items: center; gap: 6px; }
.tw { width: 18px; height: 8px; display: flex; padding-left: 8px; flex: none; }
.has::after, i.right { content: ""; width: 0; border: 4px solid transparent; border-left: 5px solid #666; border-right: 0; }
.narrow { margin-right: -2px; }
.tree b.dim { color: #868686; font-style: italic; }

.canvas { width: 610px; margin-left: 6px; border: 1px solid #b0b0b0; background: #fff; overflow: hidden; margin-top: 1px; }
.map { width: 608px; height: 566px; overflow: hidden; }
.contour { stroke: #e8d8d3; filter: url(#wiggle); }
g.brown { stroke: #a56f1c; stroke-linejoin: round; }
.stream { stroke: #2020ee; stroke-width: 3.400; stroke-dasharray: 21 9; }
.river { stroke: #0707f5; stroke-width: 5.500; stroke-linejoin: round; }
.red { stroke: #f61b14; stroke-width: 8; stroke-linejoin: round; }
.elev { font-size: 8px; fill: #555; }

.styling { flex: 1; display: flex; flex-direction: column; padding-left: 6px; }
.dockhead.right { height: 23px; justify-content: flex-end; padding: 0 2px 0 0; }
.stylebody { display: flex; height: 515px; gap: 3px; padding-left: 3px; }
.darkstrip { width: 38px; background: #5c5c5c; }
.rules { width: 467px; display: flex; flex-direction: column; }
.combo { height: 24px; margin-bottom: 6px; border: 1px solid #aaa; border-radius: 3px; background: linear-gradient(#fefefe, #eaeaea); display: flex; align-items: center; padding: 0 7px 0 78px; }
.combo span { flex: 1; }
.ruletable { height: 341px; border: 1px solid #b5b5b5; background: #fff; display: flex; flex-direction: column; }
.rhead { height: 20px; flex: none; background: linear-gradient(#fdfdfd, #ebebeb); border-bottom: 1px solid #b5b5b5; display: grid; grid-template-columns: 149px 150px 100px 1fr; }
.rhead span + span { border-left: 1px solid #c5c5c5; padding-left: 2px; line-height: 20px; }
.rrow { height: 18px; display: grid; grid-template-columns: 153px 1fr; line-height: 16px; }
.rrow .wide { padding-left: 3px; font-size: 11px; }
.hscroll { margin-top: auto; height: 14px; display: flex; border-top: 1px solid #bbb; }
.sb { width: 14px; display: grid; place-items: center; background: #f7f7f7; }
.thumb { width: 288px; border: 1px solid #bbb; border-width: 0 1px; background: linear-gradient(#fefefe, #ededed); }
.trough { flex: 1; background: #e2e2e2; border-right: 1px solid #bbb; }
.left { width: 0; border: 4px solid transparent; border-right: 5px solid #555; border-left: 0; }
.pale { opacity: .35; }
.up { width: 0; border: 4px solid transparent; border-bottom: 4px solid #555; border-top: 0; }
.brow { display: flex; align-items: center; gap: 6px; margin-top: 6px; }
.btn { height: 24px; border: 1px solid #a9a9a9; border-radius: 3px; background: linear-gradient(#fefefe, #ececec); display: flex; align-items: center; justify-content: center; flex: none; }
.sq { width: 28px; }
.dis { border-color: #c8c8c8; color: #bcbcbc; background: #f2f2f2; }
.dis svg, .dis .caret { opacity: .3; }
.levels { width: 120px; margin-left: auto; font-size: 11px; }
.redefine { width: 193px; margin-top: 6px; gap: 5px; font-size: 11px; }
.sm { border-width: 3.500px; border-bottom: 0; }
.rendering { height: 28px; display: flex; align-items: center; padding: 2px 0 0 5px; gap: 9px; }
.tri { width: 0; border: 5px solid transparent; border-left: 7px solid #333; border-right: 0; }
.apply { margin-top: 2px; }
.small { width: 24px; height: 23px; margin-bottom: 1px; }
.orange { color: #e68143; }
.green { color: #77b58b; }
.live { margin-left: auto; }
.livelabel { margin-left: -1px; }
.applybtn { width: 80px; gap: 2px; margin-left: 7px; }
.docktabs { margin-top: 4px; height: 26px; border-top: 1px solid #b9b9b9; display: flex; align-items: flex-start; }
.docktabs span { height: 23px; line-height: 22px; width: 82.500px; text-align: center; background: #dedede; border: 1px solid #b0b0b0; border-top: 0; }
.docktabs span + span { border-left: 0; }
.docktabs .cur { background: #f3f3f3; width: 100px; height: 25px; line-height: 24px; border-radius: 0 0 3px 3px; }
.docktabs span:last-child { width: 199px; }

.status { height: 30px; display: flex; align-items: center; padding: 0 0 0 4px; font-size: 9.600px; letter-spacing: -.68px; }
.status > * { flex: none; }
.field { height: 24px; background: #fff; border: 1px solid #aaa; border-radius: 3px; display: flex; align-items: center; }
.locator { width: 270px; padding-left: 8px; gap: 6px; font-size: 11.100px; letter-spacing: 0; color: #888; }
.coordlabel { width: 46px; margin-left: 310px; white-space: nowrap; }
.coord { width: 83px; margin-left: 4px; justify-content: center; letter-spacing: -1.050px; padding-right: 1px; }
.rat { margin-left: 4px; }
.scalelabel { margin-left: 13px; width: 24px; }
.scale { width: 81px; margin-left: 3px; padding-left: 3px; }
.scale span, .mag span, .rot span { flex: 1; }
.cell { width: 19px; height: 22px; border-left: 1px solid #aaa; display: grid; place-items: center; }
.lock { margin-left: 10px; }
.maglabel { margin-left: 8px; width: 48px; }
.mag { margin-left: 3px; width: 89px; padding-left: 4px; }
.spin { width: 14px; height: 22px; border-left: 1px solid #aaa; display: flex; flex-direction: column; align-items: center; justify-content: space-around; padding: 2px 0; }
.spin .up, .spin .caret { border-left-width: 3.500px; border-right-width: 3.500px; }
.rotlabel { margin-left: 8px; width: 34px; }
.rot { margin-left: 8px; width: 84px; padding-left: 4px; }
.rend { margin-left: 6px; }
.rendlabel { margin-left: 5px; width: 47px; }
.crs { margin-left: 14px; }
.crslabel { margin-left: 3px; width: 45px; }
.bubble { margin-left: 21px; }

.dialog { position: absolute; left: 267px; top: 111px; width: 730px; height: 414px; background: #efefef; border: 4px solid #000; border-top: 0; border-radius: 5px 5px 2px 2px; box-shadow: 0 4px 28px rgba(0,0,0,.5); }
.dtitle { height: 28px; background: #000; color: #f2f2f2; font-size: 12px; font-weight: bold; display: flex; align-items: center; gap: 8px; padding-right: 5px; border-radius: 4px 4px 0 0; }
.dtitle span { flex: 1; text-align: center; padding-left: 8px; }
.dtitle i { width: 14px; height: 14px; border-radius: 50%; }
.o { background: #f57900; } .b { background: #3a7df2; } .r { background: #d51b1b; }
.dbody { display: flex; gap: 7px; padding: 6px; height: 382px; }
.dleft { width: 166px; display: flex; flex-direction: column; gap: 6px; }
.tags { height: 220px; border: 1px solid #b5b5b5; background: #fff; line-height: 16px; }
.tags li { padding-left: 23px; position: relative; }
.tags .sub { padding-left: 43px; }
.open::before { content: ""; position: absolute; left: 6px; top: 6px; border: 4px solid transparent; border-top: 4px solid #666; border-bottom: 0; }
.full .grow { flex: 1; display: flex; justify-content: center; align-items: center; }
.full { padding: 0 3px; }
.full .modify { padding-right: 6px; }
.pressed { background: #d5d5d5; }
.full.pressed .grow { padding-left: 7px; gap: 1px; }
.dright { width: 536px; }
.tabs { height: 32px; display: flex; align-items: flex-start; }
.tab { height: 25px; margin-top: 2px; border: 1px solid #bdbdbd; border-left: 0; background: #e7e7e7; display: flex; align-items: center; gap: 3px; padding-left: 12px; flex: none; font-size: 11.300px; }
.tab.cur { width: 56px; height: 28px; margin-top: 0; border: 1px solid #b0b0b0; border-bottom: 0; border-radius: 3px 3px 0 0; background: #fafafa; padding-left: 11px; font-size: 11.100px; }
.t2 { width: 93px; } .tab.t3 { width: 73px; padding-left: 13px; } .tab.t4 { width: 83px; padding-left: 11px; gap: 4px; } .tab.t5 { width: 125px; padding-left: 11px; }
.tab.t6 { width: 75px; overflow: hidden; border-right: 0; gap: 4px; }
.tab small { font-size: 8px; font-weight: bold; color: #555; }
.tabnav { width: 15.500px; height: 28px; border: 1px solid #b5b5b5; border-radius: 2px; background: #f5f5f5; display: grid; place-items: center; flex: none; }
.faint { border-color: #d2d2d2; }
.list { height: 278px; border: 1px solid #b5b5b5; background: #fff; display: flex; overflow: hidden; }
.listmain { flex: 1; }
.lhead { height: 20px; background: linear-gradient(#fdfdfd, #ebebeb); border-bottom: 1px solid #b5b5b5; display: grid; grid-template-columns: 294px 1fr; line-height: 20px; }
.lhead span { padding-left: 2px; }
.lhead span + span { border-left: 1px solid #c5c5c5; }
.lrow { height: 19px; display: grid; grid-template-columns: 18px 257px 1fr; font-size: 12px; line-height: 19px; padding-left: 23px; align-items: center; }
.lrow svg { width: 12px; height: 12px; margin-bottom: 2px; }
.vscroll { width: 14px; border-left: 1px solid #bbb; display: flex; flex-direction: column; }
.vb { height: 14px; display: grid; place-items: center; background: #f7f7f7; flex: none; }
.vthumb { height: 74px; border: 1px solid #bbb; border-width: 1px 0; background: linear-gradient(90deg, #fefefe, #eee); }
.vtrough { flex: 1; background: #e2e2e2; border-bottom: 1px solid #bbb; }
.dtools { margin-top: 6px; display: flex; gap: 6px; align-items: center; }
.add { width: 40px; border-color: #3f83b0; gap: 1px; padding-left: 8px; }
.gridicon { margin-left: auto; margin-right: -1px; }
.viewbtn { background: #ddd; width: 24px; }
.filter { width: 184px; padding-left: 8px; gap: 6px; color: #888; }
.closerow { margin-top: 6px; display: flex; justify-content: flex-end; }
.close { width: 80px; gap: 1px; }

.popup { position: absolute; left: 277px; top: 485px; width: 346px; height: 98px; background: #fff; border: 1px solid #8f8f8f; box-shadow: 0 5px 18px rgba(0,0,0,.45); }
.mi { height: 24px; display: flex; align-items: center; padding-left: 6px; gap: 5px; font-size: 11px; }
.mi:first-child { height: 23px; padding-bottom: 2px; }
.hot { background: #308cc6; color: #fff; border: 1px solid #236f9f; border-width: 1px 0; }
.popup hr { margin: 0 5px; border: 0; border-top: 1px solid #bbb; height: 2px; }
.gray { color: #bebebe; }
.gray svg { opacity: .3; }
.cursor { position: absolute; left: 465px; top: 521px; width: 14px; height: 21px; }
```
